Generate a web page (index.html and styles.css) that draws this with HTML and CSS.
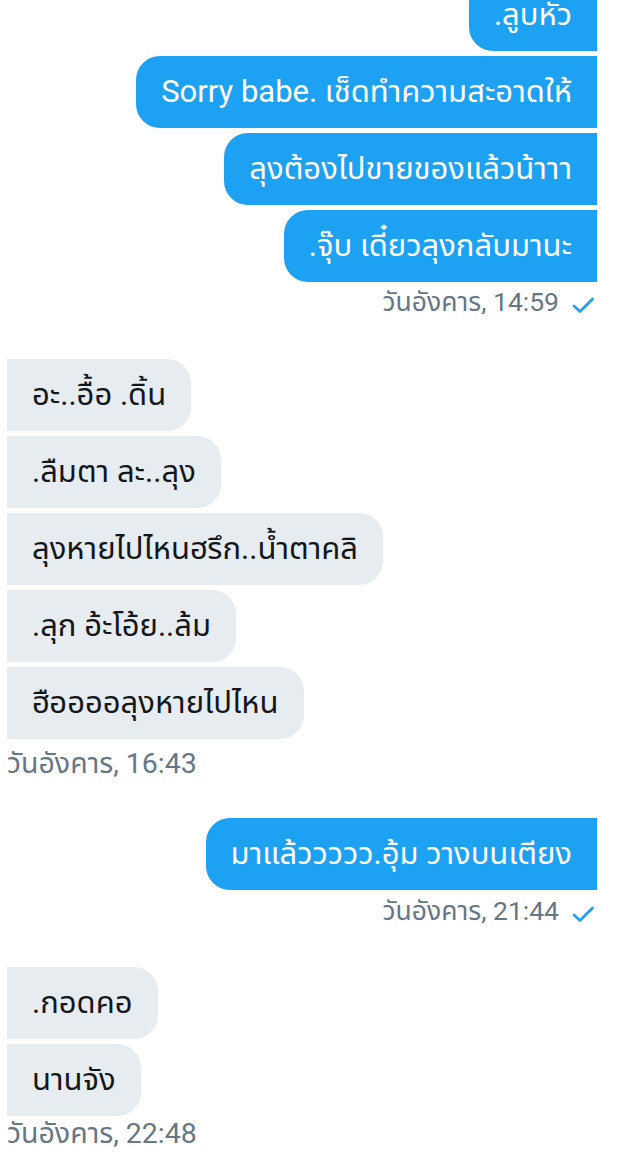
FILE: index.html
```html
<!DOCTYPE html>
<html lang="th">
<head>
    <meta charset="UTF-8">
    <meta name="viewport" content="width=device-width, initial-scale=1.0">
    <title>Messages</title>
    <link rel="stylesheet" href="styles.css">
</head>
<body>
    <div class="chat">
        <div class="group sent">
            <div class="bubble">.ลูบหัว</div>
            <div class="bubble">Sorry babe. เช็ดทำความสะอาดให้</div>
            <div class="bubble">ลุงต้องไปขายของแล้วน้าาา</div>
            <div class="bubble">.จุ๊บ เดี๋ยวลุงกลับมานะ</div>
        </div>
        <div class="stamp stamp-sent first">
            <span>วันอังคาร, 14:59</span>
            <svg class="check" width="22" height="16" viewBox="0 0 22 16"><polyline points="2,9 8,14.5 20.5,2" fill="none" stroke="#1da1f2" stroke-width="2.6" stroke-linecap="round" stroke-linejoin="round"/></svg>
        </div>

        <div class="group received">
            <div class="bubble">อะ..อื้อ .ดิ้น</div>
            <div class="bubble">.ลืมตา ละ..ลุง</div>
            <div class="bubble">ลุงหายไปไหนฮรึก..น้ำตาคลิ</div>
            <div class="bubble">.ลุก อ้ะโอ้ย..ล้ม</div>
            <div class="bubble">ฮืออออลุงหายไปไหน</div>
        </div>
        <div class="stamp stamp-received second">วันอังคาร, 16:43</div>

        <div class="group sent">
            <div class="bubble">มาแล้ววววว.อุ้ม วางบนเตียง</div>
        </div>
        <div class="stamp stamp-sent third">
            <span>วันอังคาร, 21:44</span>
            <svg class="check" width="22" height="16" viewBox="0 0 22 16"><polyline points="2,9 8,14.5 20.5,2" fill="none" stroke="#1da1f2" stroke-width="2.6" stroke-linecap="round" stroke-linejoin="round"/></svg>
        </div>

        <div class="group received">
            <div class="bubble">.กอดคอ</div>
            <div class="bubble">นานจัง</div>
        </div>
        <div class="stamp stamp-received last">วันอังคาร, 22:48</div>
    </div>
</body>
</html>
```

FILE: styles.css
```css
body {
    margin: 0;
    background: #ffffff;
    font-family: Roboto, "Noto Sans Thai", "Noto Sans", sans-serif;
    color: #14171a;
}
.chat {
    display: flex;
    flex-direction: column;
    margin-top: -21px;
    padding: 0 24px 0 7px;
}
.group {
    display: flex;
    flex-direction: column;
    gap: 5px;
}
.group.sent {
    align-items: flex-end;
}
.group.received {
    align-items: flex-start;
}
.bubble {
    height: 72px;
    display: flex;
    align-items: center;
    padding: 0 25px;
    font-size: 31px;
    white-space: nowrap;
    box-sizing: border-box;
}
.sent .bubble {
    background: #1da1f2;
    color: #ffffff;
    border-radius: 24px 0 0 24px;
}
.received .bubble {
    background: #e6ecf0;
    border-radius: 0 24px 24px 0;
}
.stamp {
    height: 30px;
    line-height: 30px;
    color: #657786;
    display: flex;
    align-items: center;
}
.stamp-sent {
    justify-content: flex-end;
    font-size: 26.5px;
    gap: 13px;
    padding-right: 3px;
}
.stamp-received {
    font-size: 28.5px;
}
.check {
    margin-top: 5px;
}
.first {
    margin-top: 5px;
    margin-bottom: 42px;
}
.second {
    margin-top: 10px;
    margin-bottom: 39px;
}
.third {
    margin-top: 6px;
    margin-bottom: 41px;
}
.last {
    margin-top: 3px;
}
```
